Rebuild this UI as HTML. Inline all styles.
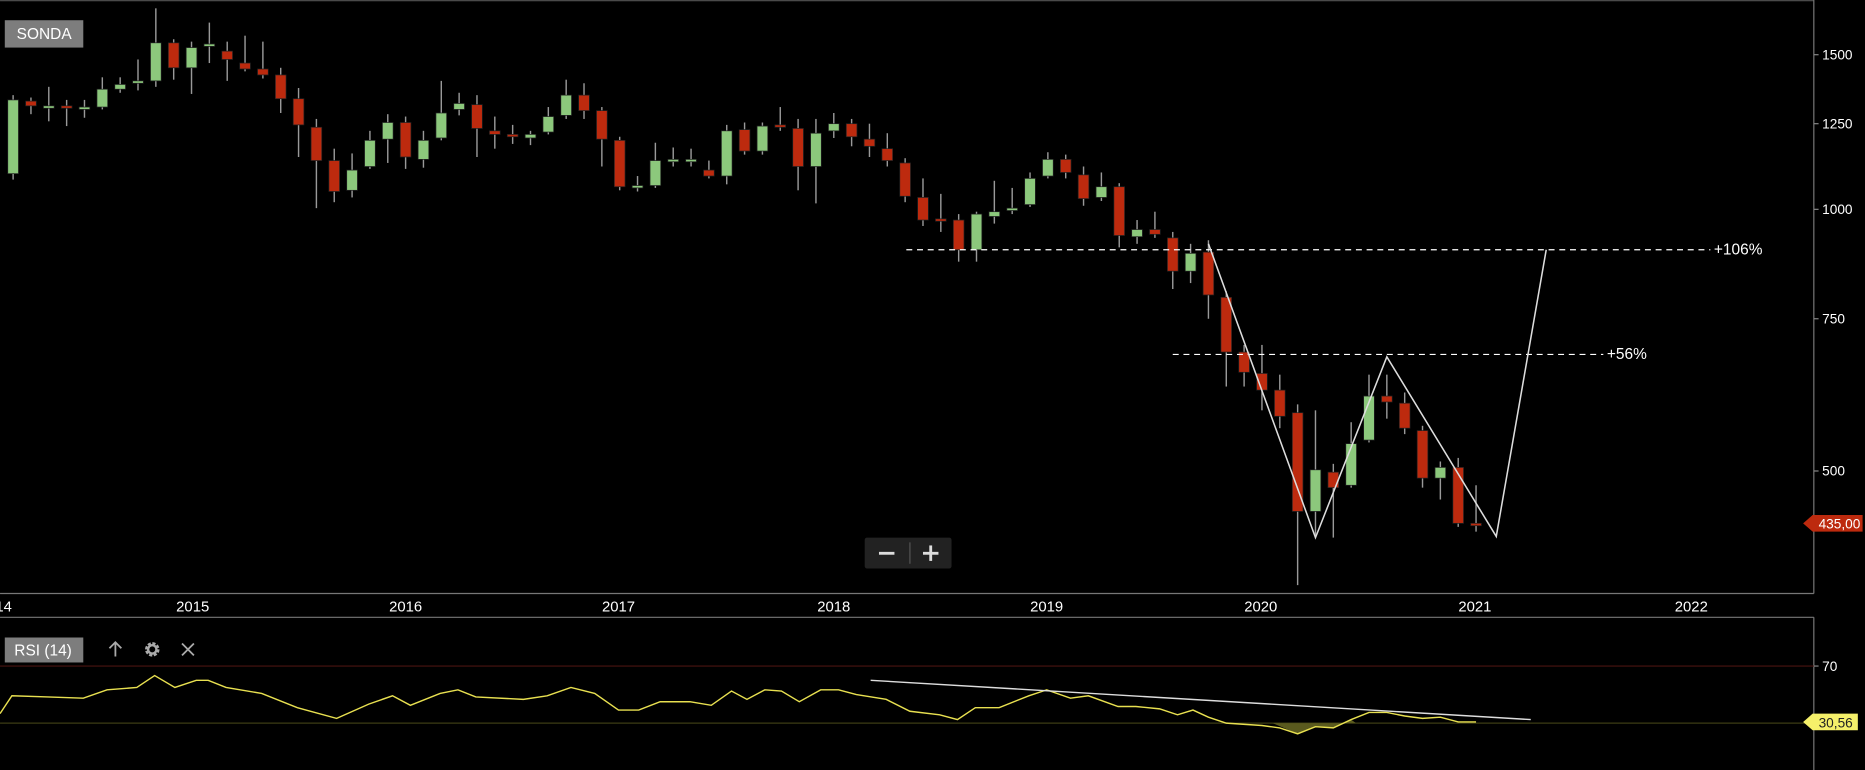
<!DOCTYPE html>
<html><head><meta charset="utf-8"><style>
html,body{margin:0;padding:0;background:#000;overflow:hidden}
svg{display:block}
text{font-family:"Liberation Sans",sans-serif}
</style></head><body>
<svg id="s" width="1865" height="770" viewBox="0 0 1568 647.4" xmlns="http://www.w3.org/2000/svg">
<rect width="1568" height="648" fill="#000"/>
<line x1="0" y1="0.6" x2="1525" y2="0.6" stroke="#555" stroke-width="1"/>
<line x1="0" y1="499" x2="1525" y2="499" stroke="#777" stroke-width="1"/>
<line x1="1525" y1="0" x2="1525" y2="499" stroke="#777" stroke-width="1"/>
<line x1="0" y1="519" x2="1525" y2="519" stroke="#777" stroke-width="1"/>
<line x1="1525" y1="519" x2="1525" y2="648" stroke="#777" stroke-width="1"/>
<g fill="#fff" font-size="11.5">
<text x="1532" y="50">1500</text><text x="1532" y="108">1250</text><text x="1532" y="180">1000</text>
<text x="1532" y="272">750</text><text x="1532" y="400">500</text><text x="1532" y="564">70</text>
</g>
<g stroke="#888"><line x1="1525" y1="46" x2="1529" y2="46"/><line x1="1525" y1="104" x2="1529" y2="104"/><line x1="1525" y1="176" x2="1529" y2="176"/><line x1="1525" y1="268" x2="1529" y2="268"/><line x1="1525" y1="396" x2="1529" y2="396"/><line x1="1525" y1="560" x2="1529" y2="560"/></g>
<g fill="#fff" font-size="12.5" text-anchor="middle">
<text x="3" y="514">14</text><text x="162" y="514">2015</text><text x="341" y="514">2016</text><text x="520" y="514">2017</text><text x="701" y="514">2018</text><text x="880" y="514">2019</text><text x="1060" y="514">2020</text><text x="1240" y="514">2021</text><text x="1422" y="514">2022</text>
</g>
<rect x="4" y="17" width="66" height="23" fill="#7d7d7d"/>
<text x="14" y="33" fill="#fff" font-size="13">SONDA</text>
<g id="c"></g>
<g stroke="#fff" stroke-width="1" stroke-dasharray="5,4"><line x1="762" y1="210" x2="1438" y2="210"/><line x1="986" y1="298" x2="1348" y2="298"/></g>
<text x="1441" y="214" fill="#fff" font-size="13">+106%</text>
<text x="1351" y="302" fill="#fff" font-size="13">+56%</text>
<polyline points="1016,205 1106,452 1166,300 1258,451 1300,210" fill="none" stroke="#ddd" stroke-width="1.3"/>
<rect x="727" y="452" width="73" height="26" rx="2" fill="#222"/>
<line x1="765" y1="456" x2="765" y2="474" stroke="#555"/>
<rect x="739" y="464" width="13" height="2.4" fill="#ddd"/>
<rect x="776" y="464" width="13" height="2.4" fill="#ddd"/><rect x="781.3" y="458.6" width="2.4" height="13" fill="#ddd"/>
<path d="M1516 440 L1524 433 L1566 433 L1566 447 L1524 447 Z" fill="#bd2a0e"/>
<text x="1529" y="444.5" fill="#fff" font-size="11.5">435,00</text>
<line x1="0" y1="560" x2="1525" y2="560" stroke="#4a1410"/>
<line x1="0" y1="608" x2="1525" y2="608" stroke="#3c3c14"/>
<path d="M1516 607 L1524 600 L1562 600 L1562 614 L1524 614 Z" fill="#f5f06a"/>
<text x="1529" y="611.5" fill="#222" font-size="11.5">30,56</text>
<rect x="4" y="536" width="66" height="21" fill="#7d7d7d"/>
<text x="12" y="551" fill="#fff" font-size="13">RSI (14)</text>
<g stroke="#aaa" stroke-width="1.5" fill="none"><path d="M97 552 V540 M92 545 L97 540 L102 545"/><path d="M153 541 L163 551 M163 541 L153 551"/></g>
<g transform="translate(128,546)"><circle r="4.6" fill="none" stroke="#aaa" stroke-width="3" stroke-dasharray="2.4,1.2"/><circle r="3.5" fill="none" stroke="#aaa" stroke-width="2"/></g>
<path d="M1070 608 L1091 617 L1106 611 L1121 612 L1136 605 L1140 608 Z" fill="#5a5a1e"/>
<polyline fill="none" stroke="#e8e050" stroke-width="1.2" points="0,600 10,585 40,586 70,587 90,580 115,578 130,568 147,578 165,572 175,572 190,578 220,583 250,595 283,604 310,592 330,585 345,593 370,583 385,580 400,586 440,588 460,585 480,578 500,583 520,597 537,597 555,590 580,590 598,593 615,581 628,588 643,580 657,581 672,590 690,580 705,580 720,584 745,588 765,598 790,601 805,605 820,595 840,595 865,585 880,580 900,587 915,585 940,594 955,594 975,596 990,601 1003,597 1016,603 1031,608 1061,610 1076,612 1091,617 1106,611 1121,612 1136,605 1151,599 1166,599 1181,602 1196,604 1211,603 1226,607 1241,607"/>
<line x1="732" y1="572" x2="1287" y2="605" stroke="#ddd" stroke-width="1.2"/>
</svg>
<script>
var d=[["g",84,146,80,151],["r",85,89,82,96],["g",89,91,73,102],["r",89,91,84,106],["g",90,92,84,99],["g",75,90,65,92],["g",71,75,65,78],["g",68,70,50,76],["g",36,68,7,73],["r",36,57,33,67],["g",40,57,35,79],["g",37,38,19,53],["r",43,50,35,68],["r",53,58,30,60],["r",58,63,35,66],["r",63,83,57,95],["r",83,105,74,132],["r",107,135,100,175],["r",135,161,125,170],["g",143,160,129,166],["g",118,140,110,142],["g",103,117,96,137],["r",103,132,98,142],["g",118,134,110,141],["g",95,116,68,118],["g",87,92,78,97],["r",88,108,80,132],["r",110,113,98,125],["r",113,115,105,121],["g",113,116,110,122],["g",98,111,90,113],["g",80,97,67,100],["r",80,93,70,100],["r",93,117,90,140],["r",118,157,115,160],["g",156,158,148,161],["g",135,156,120,158],["g",134,136,124,140],["g",134,136,125,140],["r",143,148,135,150],["g",110,148,105,155],["r",109,127,103,130],["g",106,127,103,130],["r",105,106,90,110],["r",108,140,100,160],["g",112,140,100,171],["g",104,110,95,116],["r",104,115,100,123],["r",117,123,104,132],["r",125,135,112,140],["r",137,165,133,170],["r",166,185,150,190],["r",184,186,163,195],["r",185,210,180,220],["g",180,210,178,220],["g",178,182,152,188],["g",175,177,158,180],["g",150,172,145,174],["g",134,148,128,150],["r",134,145,130,150],["r",147,167,140,173],["g",157,166,145,169],["r",157,198,154,208],["g",193,199,185,205],["r",193,197,178,200],["r",200,228,195,243],["g",213,228,205,238],["r",212,248,202,268],["r",250,296,245,325],["r",296,313,290,325],["r",314,328,290,345],["r",328,350,315,360],["r",347,430,340,492],["g",395,430,345,450],["r",397,410,390,452],["g",373,408,355,410],["g",333,370,315,372],["r",333,338,315,352],["r",339,360,330,365],["r",362,402,358,410],["g",393,402,388,420],["r",393,440,385,443],["r",440,442,408,447]];
var h="";for(var i=0;i<d.length;i++){var c=d[i],x=11+i*15.0;
h+='<line x1="'+x+'" y1="'+c[3]+'" x2="'+x+'" y2="'+c[4]+'" stroke="#999" stroke-width="1.2"/>';
var t=c[1],b=Math.max(c[2],c[1]+2);
h+='<rect x="'+(x-4.5)+'" y="'+t+'" width="9" height="'+(b-t)+'" fill="'+(c[0]=="g"?"#8cc87c":"#bd2a0e")+'" stroke="#222" stroke-width="0.6"/>';}
document.getElementById("c").innerHTML=h;
</script>
</body></html>
